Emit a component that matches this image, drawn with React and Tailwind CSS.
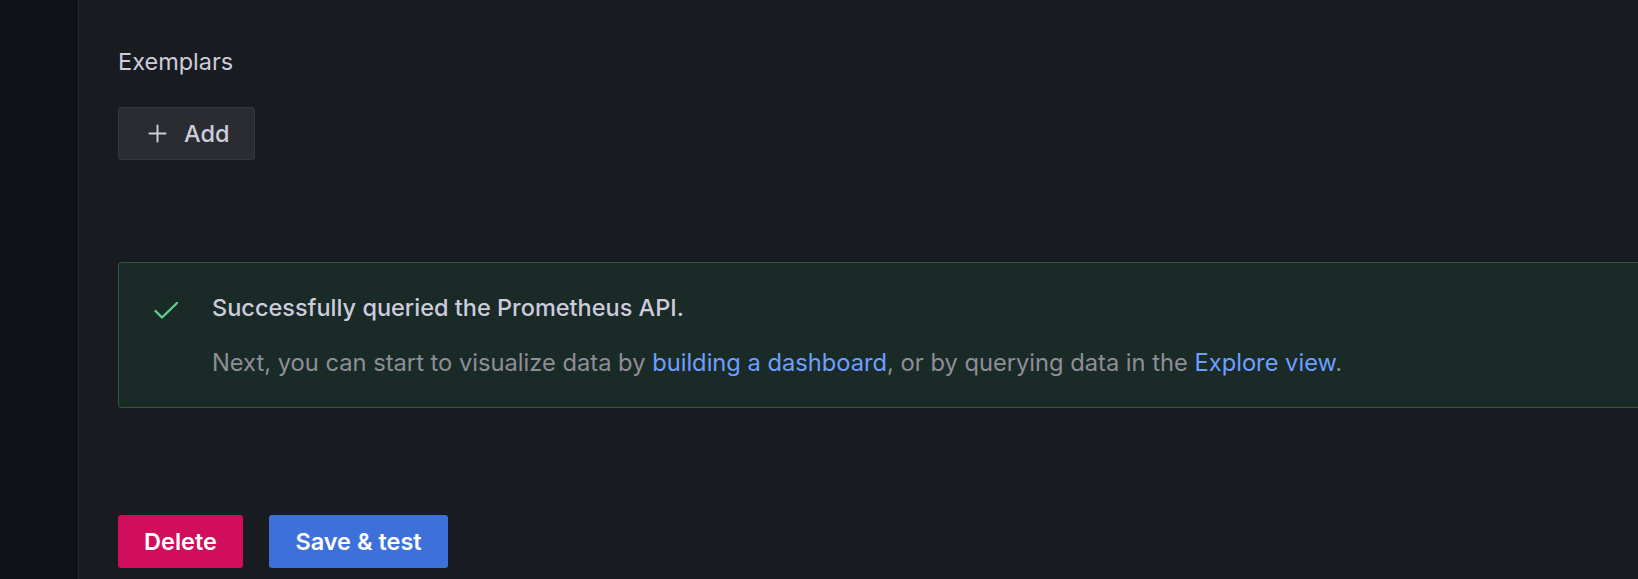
export default function App() {
  return (
    <div className="flex h-[579px] w-[1638px] overflow-hidden bg-[#181b1f] font-['Inter',sans-serif]">
      <div className="w-[79px] shrink-0 border-r border-[#26272c] bg-[#111217]" />
      <div className="flex min-w-0 flex-1 flex-col pl-[39px] pt-[47px]">
        <div className="text-[23.5px] leading-[30px] font-normal text-[#ccccdc]">Exemplars</div>
        <button className="mt-[30px] flex h-[53px] w-[137px] items-center gap-[17px] rounded-[3px] border border-[#36373d] bg-[#2a2c31] pl-[29px] text-[23.5px] font-medium text-[#ccccdc]">
          <svg width="19" height="19" viewBox="0 0 19 19" fill="none" stroke="#ccccdc" strokeWidth="2" strokeLinecap="round">
            <path d="M9.5 1.5v16M1.5 9.5h16" />
          </svg>
          Add
        </button>
        <div className="mt-[102px] flex h-[146px] w-[1560px] shrink-0 rounded-[3px] border border-[#2b5a3c] bg-[#192a27]">
          <div className="pl-[35px] pt-[39px]">
            <svg width="24" height="17" viewBox="0 0 24 17" fill="none" stroke="#5fcf8c" strokeWidth="2.4" strokeLinecap="round" strokeLinejoin="round">
              <path d="M1.5 9l6.5 6.5L23 1" />
            </svg>
          </div>
          <div className="pl-[34px] pt-[30px]">
            <div className="text-[23.5px] leading-[30px] font-medium text-[#ccccdc]">Successfully queried the Prometheus API.</div>
            <div className="mt-[25px] text-[23.7px] leading-[30px] text-[#8e8e97]">
              Next, you can start to visualize data by <span className="text-[#6e9fff]">building a dashboard</span>, or by querying data in the <span className="text-[#6e9fff]">Explore view</span>.
            </div>
          </div>
        </div>
        <div className="mt-[107px] flex gap-[26px]">
          <button className="h-[53px] w-[125px] rounded-[3px] bg-[#d10e5c] text-[23.5px] font-semibold text-white">Delete</button>
          <button className="h-[53px] w-[179px] rounded-[3px] bg-[#3d71d9] text-[23.5px] font-semibold text-white">Save &amp; test</button>
        </div>
      </div>
    </div>
  );
}
